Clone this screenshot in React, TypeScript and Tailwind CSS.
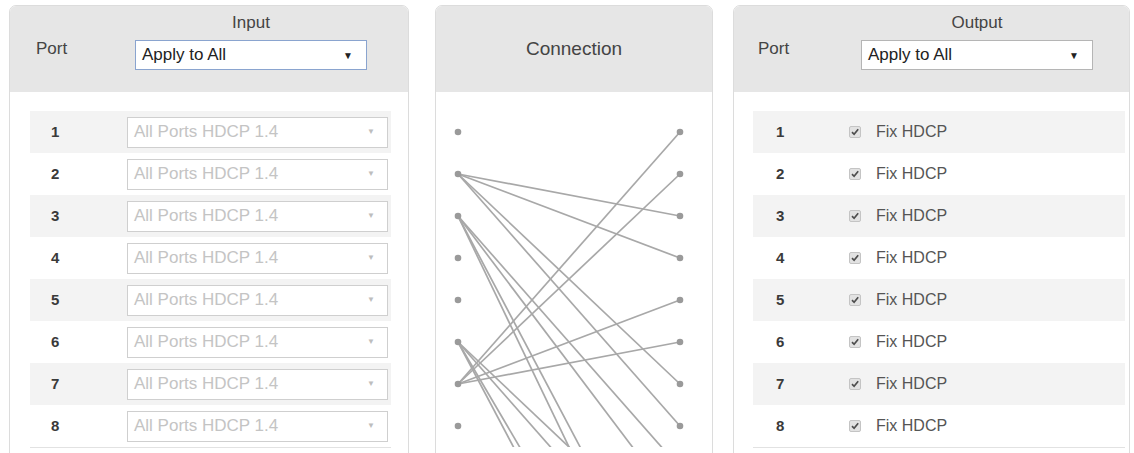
import React from "react";

const ROWS = [1, 2, 3, 4, 5, 6, 7, 8];

// input -> list of outputs routed from it
const ROUTES: Record<number, number[]> = {
  2: [3, 4, 7, 8],
  3: [9, 10, 13, 14],
  6: [11, 12, 15, 16],
  7: [1, 2, 5, 6],
};

const LEFT_X = 22;
const RIGHT_X = 244;
const portY = (n: number) => 40 + 42 * (n - 1);

function HeaderSelect({ focused }: { focused?: boolean }) {
  return (
    <div
      className={`flex h-[30px] w-[232px] items-center justify-between bg-white pl-[6px] pr-[13px] text-[17px] text-[#222] border ${
        focused ? "border-[#8aa4cf]" : "border-[#b5b5b5]"
      }`}
    >
      <span>Apply to All</span>
      <span className="text-[10px] text-[#222]">▼</span>
    </div>
  );
}

function PanelHeader({ title, padLeft, selectLeft }: { title: string; padLeft: string; selectLeft: string }) {
  return (
    <div className="flex h-[86px] rounded-t-[6px] bg-[#e6e6e6]">
      <div className={`flex items-center text-[17px] text-[#444] ${padLeft} ${selectLeft}`}>Port</div>
      <div className="flex flex-col items-center pt-[7px]">
        <div className="text-[17px] leading-[20px] text-[#444]">{title}</div>
        <div className="mt-[7px]">
          <HeaderSelect focused={title === "Input"} />
        </div>
      </div>
    </div>
  );
}

function InputPanel() {
  return (
    <div className="h-[520px] w-[400px] shrink-0 rounded-t-[7px] border border-[#dcdcdc] bg-white">
      <PanelHeader title="Input" padLeft="pl-[26px]" selectLeft="w-[125px]" />
      <div className="ml-[20px] mr-[17px] mt-[19px] border-b border-[#e2e2e2]">
        {ROWS.map((n) => (
          <div
            key={n}
            className={`flex h-[42px] items-center ${n % 2 === 1 ? "bg-[#f3f3f3]" : "bg-white"}`}
          >
            <div className="w-[97px] pl-[21px] text-[15px] font-bold text-[#3a3a3a]">{n}</div>
            <div className="flex h-[31px] w-[261px] items-center justify-between border border-[#cfcfcf] bg-white pl-[6px] pr-[12px] text-[17px] text-[#c4c4c4]">
              <span>All Ports HDCP 1.4</span>
              <span className="text-[8px] text-[#bdbdbd]">▼</span>
            </div>
          </div>
        ))}
      </div>
    </div>
  );
}

function ConnectionPanel() {
  const lines: { from: number; to: number }[] = [];
  Object.entries(ROUTES).forEach(([inp, outs]) => {
    outs.forEach((o) => lines.push({ from: Number(inp), to: o }));
  });
  return (
    <div className="ml-[26px] h-[520px] w-[278px] shrink-0 rounded-t-[7px] border border-[#dcdcdc] bg-white">
      <div className="flex h-[86px] items-center justify-center rounded-t-[6px] bg-[#e6e6e6] text-[19px] text-[#444]">
        Connection
      </div>
      <svg width="276" height="355" viewBox="0 0 276 355" className="block">
        {lines.map((l, i) => (
          <line
            key={i}
            x1={LEFT_X}
            y1={portY(l.from)}
            x2={RIGHT_X}
            y2={portY(l.to)}
            stroke="#a8a8a8"
            strokeWidth={1.7}
          />
        ))}
        {ROWS.map((n) => (
          <g key={n}>
            <circle cx={LEFT_X} cy={portY(n)} r={3.3} fill="#9a9a9a" />
            <circle cx={RIGHT_X} cy={portY(n)} r={3.3} fill="#9a9a9a" />
          </g>
        ))}
      </svg>
    </div>
  );
}

function CheckMark() {
  return (
    <span className="flex h-[12px] w-[12px] items-center justify-center rounded-[2px] border border-[#c4c4c4] bg-[#e2e2e2]">
      <svg width="10" height="10" viewBox="0 0 10 10">
        <path d="M2 5.2 L4.1 7.3 L8.2 2.2" fill="none" stroke="#4d4d4d" strokeWidth="1.7" />
      </svg>
    </span>
  );
}

function OutputPanel() {
  return (
    <div className="ml-[20px] h-[520px] w-[397px] shrink-0 rounded-t-[7px] border border-[#dcdcdc] bg-white">
      <PanelHeader title="Output" padLeft="pl-[24px]" selectLeft="w-[127px]" />
      <div className="ml-[19px] mr-[4px] mt-[19px] border-b border-[#e2e2e2]">
        {ROWS.map((n) => (
          <div
            key={n}
            className={`flex h-[42px] items-center ${n % 2 === 1 ? "bg-[#f3f3f3]" : "bg-white"}`}
          >
            <div className="w-[96px] pl-[23px] text-[15px] font-bold text-[#3a3a3a]">{n}</div>
            <CheckMark />
            <span className="ml-[15px] text-[16px] text-[#555]">Fix HDCP</span>
          </div>
        ))}
      </div>
    </div>
  );
}

export default function App() {
  return (
    <div className="h-[453px] w-[1134px] overflow-hidden bg-white font-['Liberation_Sans',Arial,sans-serif]">
      <div className="flex pl-[9px] pt-[5px]">
        <InputPanel />
        <ConnectionPanel />
        <OutputPanel />
      </div>
    </div>
  );
}
